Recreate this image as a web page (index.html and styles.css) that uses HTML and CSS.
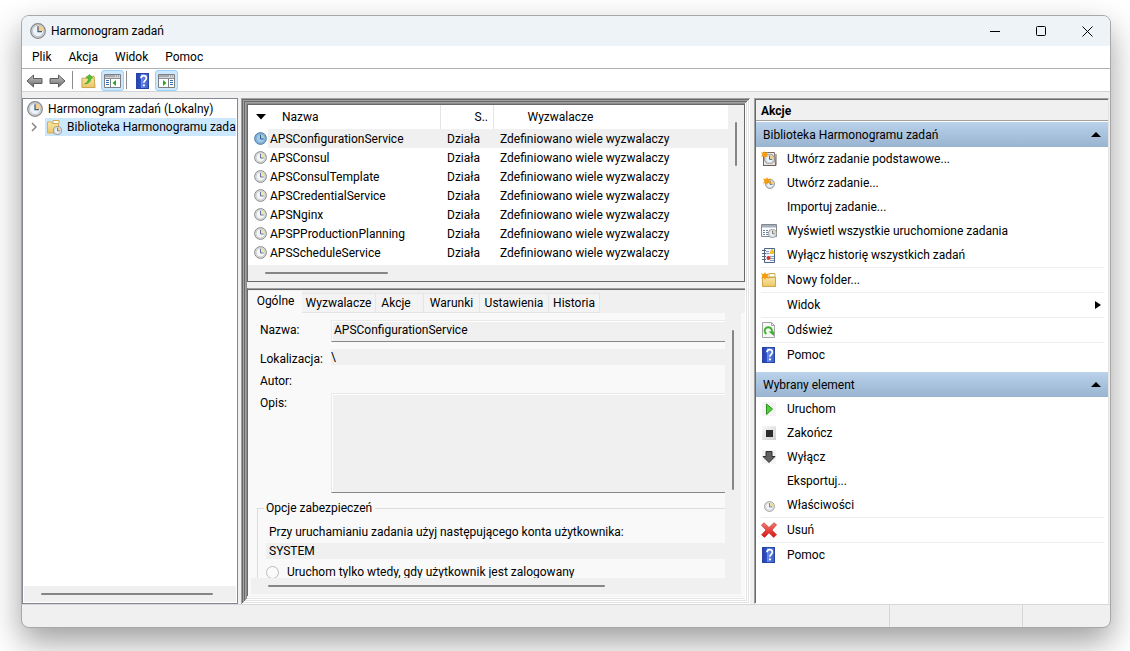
FILE: index.html
```html
<!DOCTYPE html>
<html lang="pl">
<head>
<meta charset="utf-8">
<title>Harmonogram zadań</title>
<link rel="stylesheet" href="styles.css">
</head>
<body>
<svg class="defs" aria-hidden="true">
  <defs>
    <linearGradient id="g-blue" x1="0" y1="0" x2="1" y2="0"><stop offset="0" stop-color="#2440a8"/><stop offset=".35" stop-color="#2c50c4"/><stop offset=".4" stop-color="#6c8ce4"/><stop offset="1" stop-color="#3458c8"/></linearGradient>
    <linearGradient id="g-fold" x1="0" y1="0" x2="0" y2="1"><stop offset="0" stop-color="#fbe6a4"/><stop offset="1" stop-color="#ecc666"/></linearGradient>
    <linearGradient id="g-arrow" x1="0" y1="0" x2="0" y2="1"><stop offset="0" stop-color="#c4c4c4"/><stop offset="1" stop-color="#6c6c6c"/></linearGradient>
    <linearGradient id="g-red" x1="0" y1="0" x2="0" y2="1"><stop offset="0" stop-color="#f47c74"/><stop offset="1" stop-color="#dc1010"/></linearGradient>
    <linearGradient id="g-stop" x1="0" y1="0" x2="1" y2="1"><stop offset="0" stop-color="#fafafa"/><stop offset="1" stop-color="#cfcfcf"/></linearGradient>
    <symbol id="clock" viewBox="0 0 16 16">
      <circle cx="8" cy="8" r="7.3" fill="#d8dade" stroke="#868686" stroke-width="1.2"/>
      <circle cx="8" cy="8" r="5.6" fill="#eaf2fa" stroke="#b4b8bc" stroke-width=".7"/>
      <path d="M8 8V2.600A5.400 5.400 0 0 1 13.400 8Z" fill="#f5cf86"/>
      <path d="M8 3.200V8.600H12" fill="none" stroke="#44607c" stroke-width="1.300"/>
    </symbol>
    <symbol id="task" viewBox="0 0 13 13">
      <circle cx="6.500" cy="6.500" r="5.900" fill="#dcdede" stroke="#8c8c8c"/>
      <circle cx="6.500" cy="6.500" r="4.400" fill="#f4f6f6" stroke="#b8bcc0" stroke-width=".6"/>
      <path d="M6.500 6.500V2.500A4 4 0 0 1 10.500 6.500Z" fill="#f0e8a0"/>
      <path d="M6.500 2.800V7H9.600" fill="none" stroke="#6470a0"/>
    </symbol>
    <symbol id="task-on" viewBox="0 0 13 13">
      <circle cx="6.500" cy="6.500" r="5.900" fill="#84b0d8" stroke="#5884ac"/>
      <circle cx="6.500" cy="6.500" r="4.400" fill="#a0cbea" stroke="#6c9cc4" stroke-width=".6"/>
      <path d="M6.500 6.500V2.500A4 4 0 0 1 10.500 6.500Z" fill="#a8d0b8"/>
      <path d="M6.500 2.800V7H9.600" fill="none" stroke="#2c5c94"/>
    </symbol>
    <symbol id="help" viewBox="0 0 13 16">
      <rect width="13" height="16" fill="url(#g-blue)"/>
      <path d="M.5.500h12v15H.5z" fill="none" stroke="#2844a4"/>
      <path d="M5 5.200C5 3.400 6.200 2.700 7.700 2.700s2.700.9 2.700 2.500c0 2-2.500 2.400-2.500 4.600" fill="none" stroke="#fff" stroke-width="1.700"/>
      <path d="M7 11.400h1.900v1.900H7z" fill="#fff"/>
    </symbol>
    <symbol id="star" viewBox="0 0 8 8"><path d="M4 0l1 2L8 1.500 6.500 4 8 6.500 5 6 4 8 3 6 0 6.500 1.500 4 0 1.500 3 2z" fill="#f49c10"/></symbol>
    <symbol id="folder" viewBox="0 0 16 16">
      <path d="M1 3h5l1 2h8v10H1z" fill="#e4bc5c"/><path d="M8 1.500h6V5H8z" fill="#fff" stroke="#d4ac50"/>
      <path d="M1.500 5.500h13v9h-13z" fill="url(#g-fold)" stroke="#d0a84c"/>
    </symbol>
    <symbol id="panel" viewBox="0 0 17 14">
      <path d="M.5.500h16v13H.5z" fill="#fff" stroke="#7c8084"/><path d="M1 1h15v2.500H1z" fill="#a8acb0"/><path d="M1 4.500h15" stroke="#8c9094"/>
      <path d="M11 2h1m1 0h1m1 0h1" stroke="#fff"/>
    </symbol>
  </defs>
</svg>

<main class="window">
  <header class="titlebar">
    <svg class="i16"><use href="#clock"/></svg>
    <h1 class="title">Harmonogram zadań</h1>
    <button class="win-btn" aria-label="Minimalizuj"><svg class="i11" viewBox="0 0 11 11"><path d="M0 5.500h10" stroke="#000" fill="none"/></svg></button>
    <button class="win-btn" aria-label="Maksymalizuj"><svg class="i11" viewBox="0 0 11 11"><rect x=".5" y=".5" width="9" height="9" rx="1" stroke="#000" fill="none"/></svg></button>
    <button class="win-btn" aria-label="Zamknij"><svg class="i11" viewBox="0 0 11 11"><path d="M.5.500l10 10m0-10l-10 10" stroke="#000" fill="none"/></svg></button>
  </header>

  <nav class="menubar">
    <button>Plik</button><button>Akcja</button><button>Widok</button><button>Pomoc</button>
  </nav>

  <div class="toolbar">
    <button class="tool" aria-label="Wstecz"><svg width="17" height="14" viewBox="0 0 17 14"><path d="M1 7l6.500-6v3.500h8.500v5H7.500V13z" fill="url(#g-arrow)" stroke="#5c5c5c"/></svg></button>
    <button class="tool" aria-label="Dalej"><svg width="17" height="14" viewBox="0 0 17 14"><path d="M16 7L9.500 1v3.500H1v5h8.500V13z" fill="url(#g-arrow)" stroke="#5c5c5c"/></svg></button>
    <span class="divider"></span>
    <button class="tool tool-wide" aria-label="W górę"><svg width="15" height="16" viewBox="0 0 16 16"><path d="M1 5h4l1-2h8l1 12H1z" fill="url(#g-fold)" stroke="#c8a044"/><path d="M4 11C7 10 8 7 8 5H5.500L9 1l3.500 4H10.500c0 3-2 6-6.500 6z" fill="#4cc434" stroke="#2c9c1c" stroke-width=".6"/></svg></button>
    <button class="tool tool-on" aria-label="Pokaż drzewo konsoli"><svg width="17" height="14" viewBox="0 0 17 14"><use href="#panel"/><path d="M6.500 5v8" stroke="#7c8084"/><path d="M2 6.500h3M2 8.500h3M2 10.500h3" stroke="#3870b0"/><path d="M12 6v6L8.500 9z" fill="#2ca41c"/></svg></button>
    <span class="divider divider-tight"></span>
    <button class="tool tool-help" aria-label="Pomoc"><svg width="13" height="16"><use href="#help"/></svg></button>
    <button class="tool tool-on" aria-label="Pokaż okienko akcji"><svg width="17" height="14" viewBox="0 0 17 14"><use href="#panel"/><path d="M10.500 5v8" stroke="#7c8084"/><path d="M12 6.500h3M12 8.500h3M12 10.500h3" stroke="#3870b0"/><path d="M5 6v6L8.500 9z" fill="#2ca41c"/></svg></button>
  </div>

  <div class="workspace">
    <section class="tree">
      <ul class="tree-list">
        <li class="node"><svg class="i16"><use href="#clock"/></svg><span>Harmonogram zadań (Lokalny)</span></li>
        <li class="node node-child">
          <svg class="twist" viewBox="0 0 6 10"><path d="M1 1l4 4-4 4" fill="none" stroke="#808080" stroke-width="1.400"/></svg>
          <span class="node-sel"><svg class="i16" viewBox="0 0 16 16"><path d="M1.500 3h4l1 1.500h6V14h-11z" fill="url(#g-fold)" stroke="#d8b050"/><path d="M7 1.500h6v3H7z" fill="#fff" stroke="#d4ac50"/><svg x="7" y="7" width="9" height="9"><use href="#clock"/></svg></svg><span>Biblioteka Harmonogramu zada</span></span>
        </li>
      </ul>
      <div class="tree-scroll"><span class="thumb-h"></span></div>
    </section>

    <div class="center">
      <section class="list">
        <div class="table-area">
          <table class="tasks">
            <colgroup><col class="c-icon"><col class="c-name"><col class="c-state"><col></colgroup>
            <thead><tr>
              <th colspan="2"><span class="th-name"><svg width="10" height="6" viewBox="0 0 10 6"><path d="M0 0h10L5 5.500z"/></svg>Nazwa</span></th>
              <th class="th-state">S..</th><th class="th-trig">Wyzwalacze</th>
            </tr></thead>
            <tbody>
              <tr class="sel"><td><svg class="i13"><use href="#task-on"/></svg></td><td>APSConfigurationService</td><td>Działa</td><td>Zdefiniowano wiele wyzwalaczy</td></tr>
              <tr><td><svg class="i13"><use href="#task"/></svg></td><td>APSConsul</td><td>Działa</td><td>Zdefiniowano wiele wyzwalaczy</td></tr>
              <tr><td><svg class="i13"><use href="#task"/></svg></td><td>APSConsulTemplate</td><td>Działa</td><td>Zdefiniowano wiele wyzwalaczy</td></tr>
              <tr><td><svg class="i13"><use href="#task"/></svg></td><td>APSCredentialService</td><td>Działa</td><td>Zdefiniowano wiele wyzwalaczy</td></tr>
              <tr><td><svg class="i13"><use href="#task"/></svg></td><td>APSNginx</td><td>Działa</td><td>Zdefiniowano wiele wyzwalaczy</td></tr>
              <tr><td><svg class="i13"><use href="#task"/></svg></td><td>APSPProductionPlanning</td><td>Działa</td><td>Zdefiniowano wiele wyzwalaczy</td></tr>
              <tr><td><svg class="i13"><use href="#task"/></svg></td><td>APSScheduleService</td><td>Działa</td><td>Zdefiniowano wiele wyzwalaczy</td></tr>
            </tbody>
          </table>
        </div>
        <div class="list-v"><span class="thumb-v"></span></div>
        <div class="list-h"><span class="thumb-h"></span></div>
      </section>

      <section class="details">
        <div class="tabs" role="tablist">
          <button class="tab tab-on" role="tab" aria-selected="true">Ogólne</button>
          <button class="tab tab-triggers" role="tab">Wyzwalacze</button>
          <button class="tab tab-actions" role="tab">Akcje</button>
          <button class="tab tab-terms" role="tab">Warunki</button>
          <button class="tab tab-settings" role="tab">Ustawienia</button>
          <button class="tab tab-history" role="tab">Historia</button>
        </div>
        <div class="page">
          <form class="form">
            <div class="fields">
              <label for="f-name">Nazwa:</label><input id="f-name" class="box box-name" value="APSConfigurationService" readonly>
              <label for="f-loc">Lokalizacja:</label><input id="f-loc" class="flat" value="\" readonly>
              <label for="f-author">Autor:</label><output id="f-author"></output>
              <label for="f-desc">Opis:</label><textarea id="f-desc" class="box box-desc" readonly></textarea>
            </div>
            <fieldset class="security">
              <legend>Opcje zabezpieczeń</legend>
              <label class="sec-label" for="f-user">Przy uruchamianiu zadania użyj następującego konta użytkownika:</label>
              <input id="f-user" class="flat flat-user" value="SYSTEM" readonly>
              <label class="radio"><input type="radio" name="run" disabled>Uruchom tylko wtedy, gdy użytkownik jest zalogowany</label>
            </fieldset>
          </form>
          <div class="page-v"><span class="thumb-v"></span></div>
          <div class="page-h"><span class="thumb-h"></span></div>
        </div>
      </section>
    </div>

    <aside class="actions">
      <h2 class="actions-head">Akcje</h2>
      <h3 class="group">Biblioteka Harmonogramu zadań<svg width="10" height="5" viewBox="0 0 10 5"><path d="M0 5L5 0l5 5z"/></svg></h3>
      <div class="items">
        <button class="item"><svg class="i16" viewBox="0 0 16 16"><path d="M2.500 1.500h11l1 13h-12z" fill="#ece8e4" stroke="#786c68"/><path d="M2 14.500h13V3" fill="none" stroke="#705c58"/><svg x="3" y="2.500" width="11" height="11"><use href="#clock"/></svg><svg width="7" height="7"><use href="#star"/></svg></svg>Utwórz zadanie podstawowe...</button>
        <button class="item"><svg class="i16" viewBox="0 0 16 16"><svg x="4" y="4" width="10" height="10"><use href="#clock"/></svg><svg x="2" y="2" width="8" height="8"><use href="#star"/></svg></svg>Utwórz zadanie...</button>
        <button class="item"><span class="i16"></span>Importuj zadanie...</button>
        <button class="item"><svg class="i16" viewBox="0 0 16 16"><path d="M.5 1.500h15v12H.5z" fill="#fff" stroke="#84888c"/><path d="M1 2h14v2.500H1z" fill="#a4b0c0"/><path d="M2 7.500h2m1 0h2m1 0h2M2 9.500h2m1 0h2M2 11.500h2m1 0h2" stroke="#7080a0"/><svg x="7" y="6" width="9" height="9"><use href="#clock"/></svg></svg>Wyświetl wszystkie uruchomione zadania</button>
        <button class="item"><svg class="i16" viewBox="0 0 16 16"><path d="M3.500 1.500h10v14h-10z" fill="#f4f8fc" stroke="#4c6488"/><path d="M1 3.500h4M1 6.500h4M1 9.500h4M1 12.500h4" stroke="#586878"/><path d="M5 4.500h3M5 6.500h3M9 9.500h4M9 11.500h4M9 13.500h4" stroke="#88a0c4"/><path d="M11 2l2.500 4.500h-5z" fill="#f4c820" stroke="#dca010" stroke-width=".5"/><circle cx="7.500" cy="11" r="2" fill="#d83020"/></svg>Wyłącz historię wszystkich zadań</button>
        <button class="item line"><svg class="i16" viewBox="0 0 16 16"><use href="#folder"/><svg x="0" y="0" width="8" height="8"><use href="#star"/></svg></svg>Nowy folder...</button>
        <button class="item line"><span class="i16"></span>Widok<svg class="more" width="6" height="8" viewBox="0 0 6 8"><path d="M0 0l6 4-6 4z"/></svg></button>
        <button class="item line"><svg class="i16" viewBox="0 0 16 16"><path d="M1.500.500h9l3 3v12h-12z" fill="#f8f8f8" stroke="#a4a4a4"/><path d="M10.500.500v3h3" fill="none" stroke="#a4a4a4"/><path d="M5.500 12A3.600 3.600 0 1 1 10.500 10.500" fill="none" stroke="#38b428" stroke-width="2"/><path d="M7.500 9.500h5.500v4.500z" fill="#38b428"/></svg>Odśwież</button>
        <button class="item line"><svg class="i-help"><use href="#help"/></svg>Pomoc</button>
      </div>
      <h3 class="group">Wybrany element<svg width="10" height="5" viewBox="0 0 10 5"><path d="M0 5L5 0l5 5z"/></svg></h3>
      <div class="items">
        <button class="item"><svg class="i16" viewBox="0 0 16 16"><path d="M1 1h14v14H1z" fill="#f4f4f4"/><path d="M5.500 3v10.500L11.500 8z" fill="#50d038" stroke="#289418"/></svg>Uruchom</button>
        <button class="item"><svg class="i16" viewBox="0 0 16 16"><path d="M1 1h14v14H1z" fill="url(#g-stop)"/><path d="M5 5h7v7H5z" fill="#2c2c2c"/></svg>Zakończ</button>
        <button class="item"><svg class="i16" viewBox="0 0 16 16"><path d="M1 1h14v14H1z" fill="#f4f4f4"/><path d="M5 2.500h6v5h3L8 13.500 2 7.500h3z" fill="#606060" stroke="#303030"/></svg>Wyłącz</button>
        <button class="item"><span class="i16"></span>Eksportuj...</button>
        <button class="item"><svg class="i16" viewBox="0 0 16 16"><svg x="3" y="4" width="11" height="11" opacity=".8"><use href="#clock"/></svg></svg>Właściwości</button>
        <button class="item line"><svg class="i16" viewBox="0 0 16 16"><path d="M3 .8l5 4.700L13 .8l2.600 2L11 8l4.600 4.800-3 2.600L8 10.800 3.500 15.400.5 12.800 5 8 .4 3.200z" fill="url(#g-red)" stroke="#b83c34" stroke-width=".7"/></svg>Usuń</button>
        <button class="item line"><svg class="i-help"><use href="#help"/></svg>Pomoc</button>
      </div>
    </aside>
  </div>

  <footer class="status"><span class="st-main"></span><span class="st-mid"></span><span class="st-end"></span></footer>
</main>
</body>
</html>
```
FILE: styles.css
```css
* { box-sizing: border-box; }

body {
  margin: 0;
  padding: 15px 19px 23px 21px;
  height: 100vh;
  display: flex;
  overflow: hidden;
  background: #fff;
  font: 12px/16px Roboto, "Open Sans", sans-serif;
  color: #000;
}

button, input, textarea { font: inherit; color: inherit; }
button { border: 0; padding: 0; background: none; white-space: nowrap; }
svg { display: block; flex: none; }

.defs { position: absolute; width: 0; height: 0; }
.i16 { width: 16px; height: 16px; flex: none; }
.i13 { width: 13px; height: 13px; }
.i11 { width: 11px; height: 11px; }
.i-help { width: 13px; height: 16px; margin: 0 2px 0 1px; }

.window {
  flex: 1;
  min-width: 0;
  display: flex;
  flex-direction: column;
  border: 1px solid #a8a8a8;
  border-radius: 8px;
  overflow: hidden;
  background: #f0f0f0;
  box-shadow: 0 14px 32px rgba(0, 0, 0, .38);
}

/* Title, menu and toolbar */
.titlebar { display: flex; align-items: center; height: 30px; padding-left: 8px; background: #edf3f7; }
.title { flex: 1; margin: 0 0 0 5px; font-size: 12px; font-weight: 400; }
.win-btn { width: 46px; height: 30px; display: flex; align-items: center; justify-content: center; }

.menubar { display: flex; gap: 17px; height: 23px; padding-left: 10px; background: #fff; border-bottom: 1px solid #b0b0b0; }

.toolbar { display: flex; align-items: flex-end; height: 23px; padding-left: 1px; background: #fff; border-bottom: 1px solid #d4d4d4; }
.tool { width: 23px; height: 21px; display: flex; align-items: center; justify-content: center; }
.tool-wide { width: 28px; padding-left: 3px; }
.tool-help { width: 28px; padding-left: 2px; }
.tool-on { border: 1px solid #99d1ff; border-radius: 3px; background: #cce8ff; }
.divider { width: 1px; height: 18px; margin: 0 0 2px 3px; background: #8c8c8c; }
.divider-tight { margin-left: 2px; }

.workspace { flex: 1; min-height: 0; display: flex; padding-top: 6px; }

.thumb-h { display: block; height: 2px; border-radius: 1px; background: #868686; }
.thumb-v { display: block; width: 2px; border-radius: 1px; background: #868686; }

/* Console tree */
.tree { flex: none; width: 216px; display: flex; flex-direction: column; padding: 1px; border: 1px solid #828790; background: #fff; }
.tree-list { flex: 1; margin: 0; padding: 0 0 0 3px; list-style: none; overflow: hidden; }
.node { display: flex; align-items: center; gap: 5px; height: 18px; white-space: nowrap; }
.node-child { padding-left: 4px; gap: 8px; }
.twist { width: 6px; height: 10px; }
.node-sel { flex: 1; display: flex; align-items: center; gap: 5px; height: 18px; padding-left: 1px; background: #cce8ff; }
.tree-scroll { height: 16px; padding: 7px 23px 0 17px; background: #f0f0f0; }

/* Centre column inside its sunken frame */
.center {
  flex: 1;
  min-width: 0;
  display: flex;
  flex-direction: column;
  margin: 0 4px 0 3px;
  padding: 6px 5px 8px 6px;
  box-shadow:
    inset 1px 1px 0 #a0a0a0, inset -1px -1px 0 #fff,
    inset 2px 2px 0 #696969, inset -2px -2px 0 #e3e3e3,
    inset 3px 3px 0 #a0a0a0, inset -3px -3px 0 #fff,
    inset 4px 4px 0 #696969, inset -4px -4px 0 #e3e3e3,
    inset 5px 5px 0 #a0a0a0, inset -5px -5px 0 #fff,
    inset 6px 6px 0 #8c8c8c, inset 0 -6px 0 #e3e3e3, inset 0 -7px 0 #fff;
}

.list { display: grid; grid-template-columns: 1fr 16px; border: 1px solid #696969; background: #f0f0f0; }
.table-area { height: 160px; overflow: hidden; background: #fff; }
.tasks { width: 100%; table-layout: fixed; border-collapse: collapse; }
.c-icon { width: 20px; }
.c-name { width: 172px; }
.c-state { width: 53px; }
.tasks th { height: 24px; padding: 0; font-weight: 400; text-align: left; border-right: 1px solid #e5e5e5; }
.tasks th:last-child { border-right: 0; }
.th-name { display: flex; align-items: center; gap: 16px; padding-left: 8px; }
.tasks .th-state { padding-left: 34px; }
.tasks .th-trig { padding-left: 34px; }
.tasks td { height: 19px; padding: 0 0 0 7px; white-space: nowrap; }
.tasks td:first-child { padding-left: 6px; }
.tasks td:nth-child(2) { padding-left: 2px; }
.sel td:not(:first-child) { background: #f0f0f0; }
.list-v { padding: 17px 0 0 7px; }
.list-v .thumb-v { height: 44px; }
.list-h { height: 16px; padding: 7px 0 0 17px; }
.list-h .thumb-h { width: 123px; }

/* Task details */
.details {
  flex: 1;
  min-height: 0;
  display: flex;
  flex-direction: column;
  margin-top: 6px;
  padding: 1px 4px 2px 1px;
  border-top: 1px solid #a0a0a0;
  border-left: 1px solid #696969;
  box-shadow: inset 0 1px 0 #696969;
  background: #f9f9f9;
}
.tabs { flex: none; display: flex; align-items: flex-end; height: 23px; margin-right: -4px; background: #f0f0f0; }
.tab { height: 20px; border: 1px solid #e5e5e5; border-left: 0; background: #f3f3f3; }
.tab-on { width: 53px; height: 22px; padding-bottom: 3px; border: 0; background: #f9f9f9; }
.tab-triggers { width: 74px; }
.tab-actions { width: 48px; padding-right: 7px; }
.tab-terms { width: 56px; }
.tab-settings { width: 69px; }
.tab-history { width: 51px; }

.page { flex: 1; min-height: 0; display: grid; grid-template: minmax(0, 1fr) 16px / minmax(0, 1fr) 16px; }
.form { padding: 7px 0 0 8px; overflow: hidden; }
.fields { display: grid; grid-template-columns: 71px 1fr; row-gap: 2px; padding-left: 3px; align-items: start; line-height: 20px; }
.box { display: block; width: 100%; margin: 0; border: 1px solid #e9e9e9; border-right: 0; border-bottom-color: #868686; border-radius: 0; background: #f0f0f0; outline: 0; resize: none; box-shadow: inset 1px 1px 0 #fff; }
.box-name { height: 22px; padding: 0 2px 2px; margin-bottom: 5px; }
.box-desc { height: 100px; }
.flat { display: block; width: 100%; height: 16px; margin: 0; padding: 0; border: 0; background: #f0f0f0; outline: 0; }
.security { margin: 7px 0 0; padding: 8px 0 0 8px; min-width: 0; border: 1px solid #dcdcdc; border-right: 0; }
.security legend { padding: 0 3px 0 2px; margin-left: -2px; }
.sec-label { display: block; margin-left: 3px; white-space: nowrap; }
.flat-user { padding-left: 3px; margin: 3px 0 5px; }
.radio { display: flex; align-items: center; gap: 8px; white-space: nowrap; }
.radio input { appearance: none; width: 13px; height: 13px; margin: 0; border: 1px solid #bcbcbc; border-radius: 50%; background: #fbfbfb; }
.page-v { padding: 17px 0 0 7px; background: #f0f0f0; }
.page-v .thumb-v { height: 160px; }
.page-h { grid-column: 1 / -1; margin-left: 2px; padding: 7px 0 0 17px; background: #f0f0f0; }
.page-h .thumb-h { width: 337px; }

/* Actions pane */
.actions { flex: none; width: 355px; margin-right: 1px; border: 1px solid; border-color: #a0a0a0 #e3e3e3 #fff #a0a0a0; box-shadow: inset 1px 1px 0 #696969; padding: 1px 0 0 1px; background: #fff; }
.actions-head { margin: 0 0 1px; height: 21px; padding: 3px 5px 0; font-size: 12px; line-height: 16px; font-weight: 700; background: #f0f0f0; border-bottom: 1px solid #a0a0a0; }
.group { display: flex; align-items: center; justify-content: space-between; height: 25px; margin: 0; padding: 0 7px; font-size: 12px; font-weight: 400; background: linear-gradient(#bad2ea, #99b4d1); }
.items { display: flex; flex-direction: column; padding: 0 4px 0 5px; }
.items:not(:last-child) { padding-bottom: 5px; }
.item { display: flex; align-items: center; gap: 10px; height: 24px; text-align: left; }
.line { height: 25px; border-top: 1px solid #ededed; }
.more { margin-left: auto; margin-right: 3px; }

.status { flex: none; display: flex; height: 23px; border-top: 1px solid #d7d7d7; }
.st-main { flex: 1; }
.st-mid { width: 133px; border-left: 1px solid #d7d7d7; }
.st-end { width: 88px; border-left: 1px solid #d7d7d7; }
```
